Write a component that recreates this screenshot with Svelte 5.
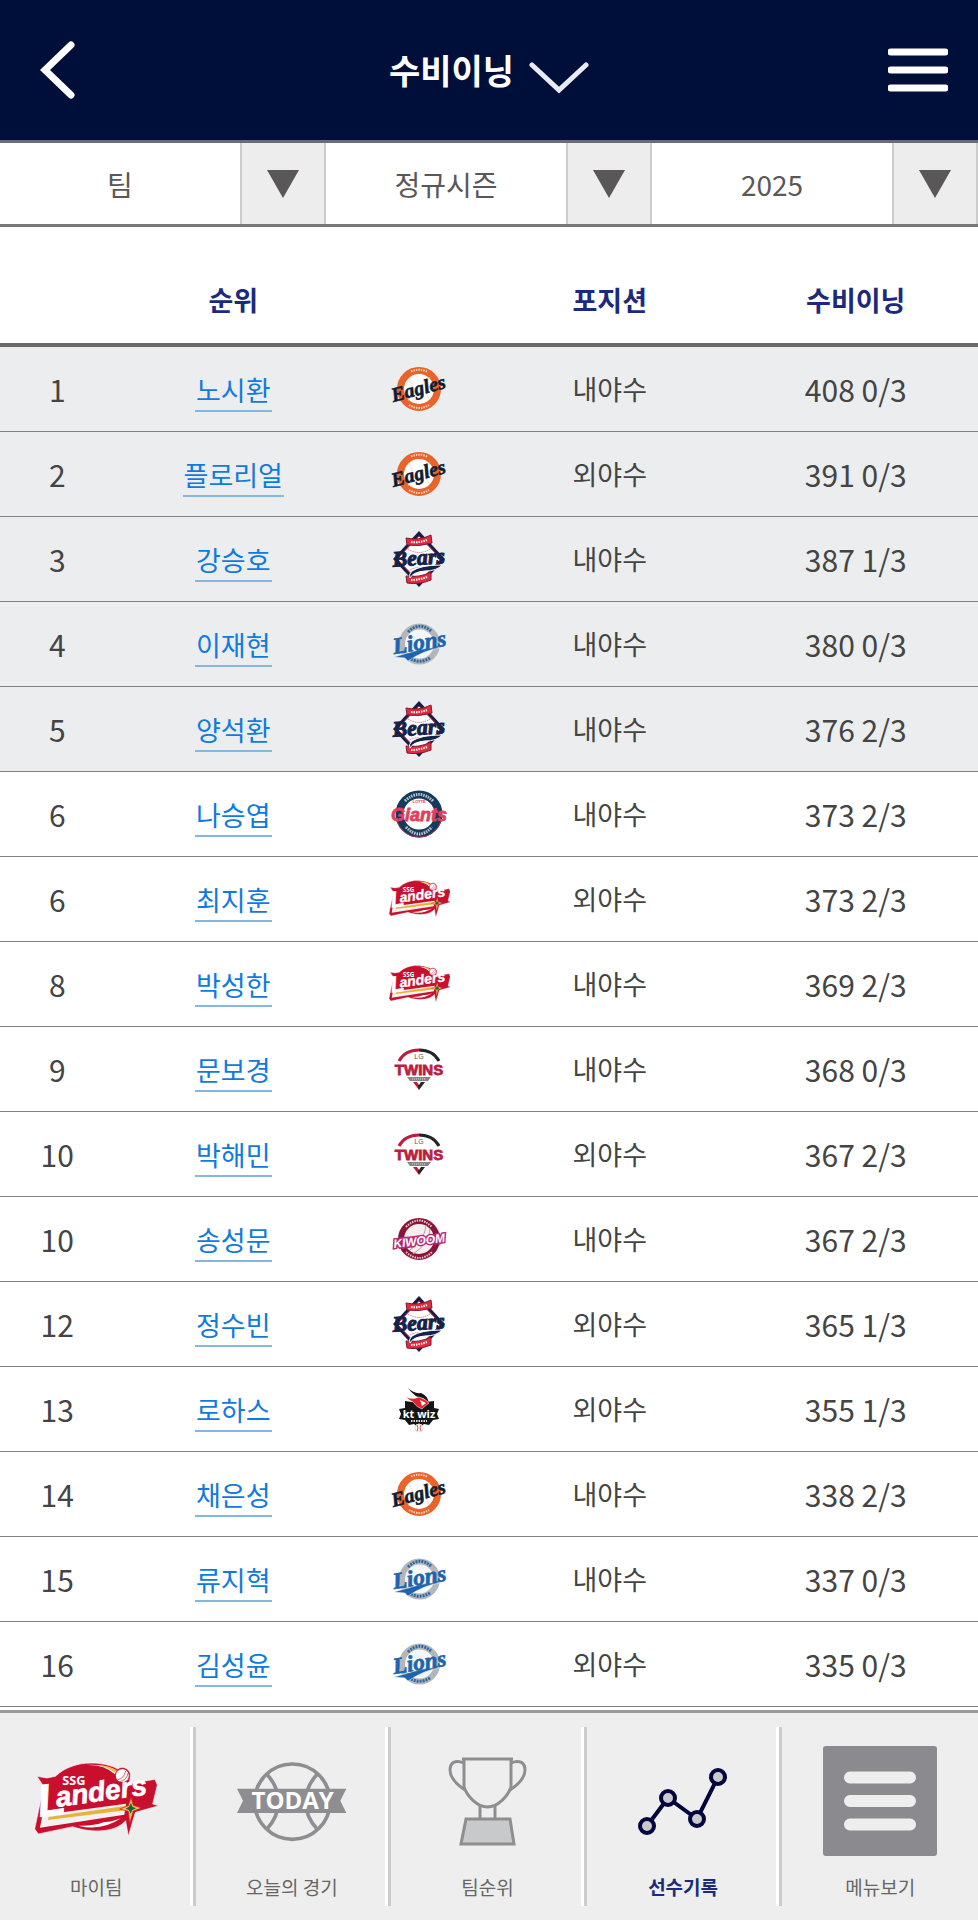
<script>
  const filters = [
    { label: '팀 선택', options: ['팀'] },
    { label: '시즌 선택', options: ['정규시즌'] },
    { label: '연도 선택', options: ['2025'] }
  ];

  const players = [
    [1, '노시환', 'eagles', '내야수', '408 0/3'],
    [2, '플로리얼', 'eagles', '외야수', '391 0/3'],
    [3, '강승호', 'bears', '내야수', '387 1/3'],
    [4, '이재현', 'lions', '내야수', '380 0/3'],
    [5, '양석환', 'bears', '내야수', '376 2/3'],
    [6, '나승엽', 'giants', '내야수', '373 2/3'],
    [6, '최지훈', 'landers', '외야수', '373 2/3'],
    [8, '박성한', 'landers', '내야수', '369 2/3'],
    [9, '문보경', 'twins', '내야수', '368 0/3'],
    [10, '박해민', 'twins', '외야수', '367 2/3'],
    [10, '송성문', 'kiwoom', '내야수', '367 2/3'],
    [12, '정수빈', 'bears', '외야수', '365 1/3'],
    [13, '로하스', 'wiz', '외야수', '355 1/3'],
    [14, '채은성', 'eagles', '내야수', '338 2/3'],
    [15, '류지혁', 'lions', '내야수', '337 0/3'],
    [16, '김성윤', 'lions', '외야수', '335 0/3']
  ];
</script>

{#snippet landersArt()}
  <path fill="#c8102e" stroke="#fff" stroke-opacity=".6" stroke-width="3" d="M108 262L138 267 163 262C195 232 240 218 290 223 320 226 340 234 350 240A24 24 0 0 1 387 266L386 284 462 271 469 288 455 345 474 350 403 370 382 442 374 395C345 430 275 434 215 413L112 435 101 420 128 292Z" />
  <path fill="#fff" d="M232 410Q300 428 360 388Q330 400 310 399Q275 412 232 410Z" />
  <path fill="#fff" d="M255 228Q310 226 342 256L348 246Q315 224 255 228Z" />
  <path fill="#f3b94a" d="M290 230Q322 234 343 252L347 244Q322 228 290 230Z" />
  <path fill="#f4f1f1" d="M124 378L375 344 370 377 117 416Z" />
  <path fill="#e8b13c" d="M143 384L378 350 374 364 140 393Z" />
  <circle cx="364" cy="260" r="21" fill="#fff" stroke="#c8102e" stroke-width="3" />
  <path d="M350 272Q368 270 374 246M355 278Q378 274 381 252" fill="none" stroke="#c8102e" stroke-width="2" />
  <g transform="rotate(-8 170 355)">
    <text x="112" y="376" font-family="Liberation Sans, sans-serif" font-size="84" font-style="italic" font-weight="700" fill="#fff" stroke="#fff" stroke-width="2"><tspan font-size="136">L</tspan><tspan x="168" y="354">anders</tspan></text>
  </g>
  <text x="184" y="289" font-family="Open Sans, sans-serif" font-size="38" font-weight="700" fill="#fff">SSG</text>
  <path fill="#f0bd51" stroke="#c8102e" stroke-width="2" d="M390 324L397 349 422 357 397 366 386 405 382 367 356 360 382 350Z" />
  <path fill="#176534" d="M390 342L394 353 405 358 394 363 389 374 384 363 374 359 384 353Z" />
{/snippet}

{#snippet logo(team)}
  {#if team === 'landers'}
    <svg class="logo" viewBox="95 153 372 360" role="img" aria-label="SSG Landers">{@render landersArt()}</svg>
  {:else if team === 'eagles'}
    <svg class="logo" viewBox="0 0 62 60" role="img" aria-label="Eagles">
      <circle cx="31" cy="30" r="18.5" fill="#fff" stroke="#e9632a" stroke-width="7" />
      <path d="M20 19Q29 30 20 42M42 18Q33 29 42 41" fill="none" stroke="#f5b28f" stroke-dasharray="1 1" />
      <path d="M23 12.500Q31 9 39 12.500M21 46Q31 52 41 46" fill="none" stroke="#fbd2bd" stroke-width="2" stroke-dasharray="1.500 1" />
      <g transform="rotate(-15 31 32)" font-family="Liberation Serif, serif" font-weight="700" font-style="italic" font-size="20">
        <text x="31" y="36" text-anchor="middle" fill="#101c30" stroke="#101c30" stroke-width=".6">Eagles</text>
      </g>
    </svg>
  {:else if team === 'bears'}
    <svg class="logo" viewBox="0 0 62 60" role="img" aria-label="Bears">
      <path d="M31 2L57 30 31 58 5 30Z" fill="#1c1b45" />
      <path d="M31 7L53 30 31 53 9 30Z" fill="#fff" stroke="#a5243c" />
      <path d="M20 20Q31 27 42 20M20 42Q31 35 42 42" fill="none" stroke="#d9576a" stroke-dasharray="1 1" />
      <path d="M18 9Q31 12 43 6L44 14Q31 18 19 16ZM18 47Q31 49 43 43L43 51Q31 56 19 54Z" fill="#e22c3c" stroke="#7d1835" />
      <path d="M23 13Q31 14 39 11M23 51Q31 51 39 48" fill="none" stroke="#fff" stroke-width="2" stroke-dasharray="1.500 1" />
      <path d="M53 36Q33 36 24 42Q20 46 22 49Q25 43 37 42Q49 42 54 36Z" fill="#14234c" stroke="#fff" />
      <g transform="rotate(-4 31 34)" font-family="Liberation Serif, serif" font-weight="700" font-style="italic" font-size="22">
        <text x="31" y="36" text-anchor="middle" fill="#14234c" stroke="#14234c" stroke-width="1">Bears</text>
      </g>
    </svg>
  {:else if team === 'lions'}
    <svg class="logo" viewBox="0 0 62 60" role="img" aria-label="Lions">
      <circle cx="31.500" cy="30" r="17.500" fill="#f4f6f7" stroke="#b4b7b9" stroke-width="6" />
      <path d="M20 18Q31 7 43 17M23 45Q32 50 42 44" fill="none" stroke="#2b66a5" stroke-width="3" stroke-dasharray="2 1" />
      <path d="M6 43L27 37Q41 33 52 34Q36 36 20 47L17 44Z" fill="#1d64ad" stroke="#f4f6f7" stroke-width=".5" />
      <g transform="rotate(-9 31 32)" font-family="Liberation Serif, serif" font-weight="700" font-style="italic" font-size="23">
        <text x="32" y="36" text-anchor="middle" fill="#1d64ad" stroke="#1d64ad" stroke-width=".7">Lions</text>
      </g>
    </svg>
  {:else if team === 'giants'}
    <svg class="logo" viewBox="0 0 62 60" role="img" aria-label="Giants">
      <circle cx="31" cy="30" r="19.500" fill="#fff" stroke="#153b5c" stroke-width="8" />
      <path d="M9 37A23 23 0 0 0 53 37" fill="none" stroke="#a63252" stroke-width="1" />
      <path d="M17 17Q31 4 45 17M18 43Q31 57 44 43" fill="none" stroke="#b9c9d3" stroke-width="3" stroke-dasharray="1.500 1" />
      <text x="31" y="19" text-anchor="middle" font-family="Liberation Sans, sans-serif" font-size="4" font-weight="700" fill="#df405b">LOTTE</text>
      <text x="31" y="37" text-anchor="middle" font-family="Liberation Sans, sans-serif" font-size="18" font-weight="700" font-style="italic" fill="#df405b" stroke="#df405b" stroke-width=".8">Giants</text>
    </svg>
  {:else if team === 'twins'}
    <svg class="logo" viewBox="0 0 62 60" role="img" aria-label="LG Twins">
      <path d="M11 22Q17 11 31 11" fill="none" stroke="#c11a3e" stroke-width="3" />
      <path d="M31 11Q45 11 51 22" fill="none" stroke="#252525" stroke-width="3" />
      <text x="31" y="20" text-anchor="middle" font-family="Liberation Sans, sans-serif" font-size="7" fill="#555">LG</text>
      <text x="31" y="36" text-anchor="middle" font-family="Liberation Sans, sans-serif" font-size="15" font-weight="700" fill="#bd1b40" stroke="#bd1b40" stroke-width=".8">TWINS</text>
      <path d="M19 38H43L40 42H22Z" fill="#858585" />
      <path d="M24 40H38" stroke="#ddd" stroke-dasharray="1 1" />
      <path d="M25 43H31V51Z" fill="#c11a3e" />
      <path d="M37 43L31 51 30 47 32 43Z" fill="#252525" />
      <path d="M29 43H33L31 46Z" fill="#fff" />
    </svg>
  {:else if team === 'kiwoom'}
    <svg class="logo" viewBox="0 0 62 60" role="img" aria-label="Kiwoom">
      <circle cx="31" cy="30" r="18" fill="#f5eeee" stroke="#8b1537" stroke-width="6" />
      <path d="M22 41Q37 31 38 16M25 45Q42 34 42 20" fill="none" stroke="#c899a6" stroke-width="1" />
      <path d="M18 18Q31 5 44 18M18 43Q31 55 44 43" fill="none" stroke="#e6c7ce" stroke-width="2" stroke-dasharray="1.500 1" />
      <g transform="rotate(-7 31 30)" font-family="Liberation Sans, sans-serif" font-size="12" font-weight="700" font-style="italic">
        <text x="31" y="36" text-anchor="middle" fill="#fff" stroke="#b62a78" stroke-width="3" paint-order="stroke">KIWOOM</text>
      </g>
    </svg>
  {:else}
    <svg class="logo" viewBox="0 0 62 60" role="img" aria-label="kt wiz">
      <path d="M17 22L24 23 31 19 38 23 46 22 46 29 51 30 49 35 51 40 45 41 41 46 36 45 31 49 26 45 21 46 17 41 11 40 13 35 11 30 17 29Z" fill="#151515" />
      <path d="M20 9Q26 15 33 14Q39 16 41 24L35 19Q27 19 20 9Z" fill="#151515" />
      <path d="M18 18Q25 21 31 18Q38 20 41 24Q37 27 34 30Q28 28 25 23Q22 22 18 18Z" fill="#e3232e" stroke="#fff" stroke-width=".5" />
      <path d="M32 21L38 24 34 27Z" fill="#fff" />
      <circle cx="31" cy="49" r="4" fill="#fff" stroke="#dedede" />
      <path d="M29 46Q31 49 29 52M33 46Q31 49 33 52" fill="none" stroke="#df5860" />
      <text x="31" y="39" text-anchor="middle" font-family="Open Sans, sans-serif" font-size="11" font-weight="700" fill="#fff">kt wiz</text>
      <path d="M23 42H39" stroke="#ddd" stroke-width="2" stroke-dasharray="1.500 1" />
    </svg>
  {/if}
{/snippet}

<div class="page">
  <header>
    <button class="back" aria-label="뒤로">
      <svg width="36" height="60" viewBox="0 0 36 60"><path d="M31 5L5 30 31 55" fill="none" stroke="#fff" stroke-width="7" stroke-linecap="round" /></svg>
    </button>
    <h1>
      <button class="title">수비이닝
        <svg width="60" height="34" viewBox="0 0 60 34"><path d="M3 4L30 29 57 4" fill="none" stroke="#e9ebf2" stroke-width="5" stroke-linecap="round" /></svg>
      </button>
    </h1>
    <button class="menu" aria-label="메뉴">
      <svg width="60" height="46" viewBox="0 0 60 46"><path d="M3 5H57M3 23H57M3 41H57" stroke="#fff" stroke-width="7" stroke-linecap="round" /></svg>
    </button>
  </header>

  <form class="filters">
    {#each filters as filter}
      <label>
        <select aria-label={filter.label}>
          {#each filter.options as option}<option>{option}</option>{/each}
        </select>
        <span class="arrow"><svg width="32" height="28" viewBox="0 0 32 28"><path d="M0 0H32L16 28Z" fill="#595757" /></svg></span>
      </label>
    {/each}
  </form>

  <main>
    <table>
      <colgroup><col class="c-rank" /><col class="c-name" /><col class="c-team" /><col class="c-pos" /><col class="c-value" /></colgroup>
      <thead>
        <tr><td></td><th scope="col">순위</th><td></td><th scope="col">포지션</th><th scope="col">수비이닝</th></tr>
      </thead>
      <tbody>
        {#each players as [rank, name, team, position, innings], i}
          <tr class:top={i < 5}>
            <td class="num">{rank}</td>
            <td><a href="#player-{i}">{name}</a></td>
            <td>{@render logo(team)}</td>
            <td>{position}</td>
            <td class="num">{innings}</td>
          </tr>
        {/each}
      </tbody>
    </table>
  </main>

  <nav>
    <a href="#myteam">
      <svg viewBox="114 171 342 330" class="wide" aria-hidden="true">{@render landersArt()}</svg>
      <span>마이팀</span>
    </a>
    <a href="#today">
      <svg viewBox="702 171 342 330" aria-hidden="true">
        <g fill="none" stroke="#8e8d92" stroke-width="11">
          <circle cx="874" cy="338" r="113" />
          <path d="M796 254Q832 292 832 338T796 422M950 254Q914 292 914 338T950 422" />
        </g>
        <path d="M708 299H1036L1018 335 1036 372H708L726 335Z" fill="#8e8d92" />
        <text x="875" y="361" text-anchor="middle" font-family="Open Sans, sans-serif" font-size="72" font-weight="700" fill="#fff">TODAY</text>
      </svg>
      <span>오늘의 경기</span>
    </a>
    <a href="#standings">
      <svg viewBox="430 1747 114 110" aria-hidden="true">
        <g fill="none" stroke="#8e8d90" stroke-width="3">
          <path d="M462 1760H513M464 1760V1788C467 1797 477 1808 487.500 1808S508 1797 511 1788V1760" />
          <path d="M464 1764C455 1760 450 1764 450 1771 450 1779 456 1785 465 1791M511 1764C520 1760 525 1764 525 1771 525 1779 519 1785 510 1791" />
          <path d="M480 1807V1819M495 1807V1819" />
          <path d="M466 1820H510L514 1845H461Z" fill="#c8c9cb" />
        </g>
      </svg>
      <span>팀순위</span>
    </a>
    <a href="#records" class="active" aria-current="page">
      <svg viewBox="625 1747 114 110" aria-hidden="true">
        <path d="M646 1827L667 1799 696 1820 717 1778" fill="none" stroke="#04053d" stroke-width="4" />
        <g fill="#c9cacd" stroke="#04053d" stroke-width="4">
          <circle cx="646" cy="1827" r="7" /><circle cx="667" cy="1799" r="7" /><circle cx="696" cy="1820" r="7" /><circle cx="717" cy="1778" r="7" />
        </g>
      </svg>
      <span>선수기록</span>
    </a>
    <a href="#menu">
      <svg viewBox="0 0 114 110" aria-hidden="true">
        <rect width="114" height="110" rx="3" fill="#8b8a8f" />
        <path d="M27 31.500H87M27 55H87M27 78.500H87" stroke="#eee" stroke-width="12" stroke-linecap="round" />
      </svg>
      <span>메뉴보기</span>
    </a>
  </nav>
</div>

<style>
  :global(body) {
    margin: 0;
    background: #fff;
  }
  .page {
    display: flex;
    flex-direction: column;
    min-height: 100vh;
    font-family: 'Noto Sans CJK KR', sans-serif;
    color: #444;
  }
  .page :is(button, select) {
    font: inherit;
    color: inherit;
    border: 0;
    background: none;
    padding: 0;
  }
  svg {
    display: block;
  }
  header {
    display: grid;
    grid-template-columns: 1fr auto 1fr;
    align-items: center;
    height: 140px;
    padding: 0 30px;
    color: #fff;
    background: #000f3a;
    border-bottom: 3px solid #6a6d76;
  }
  .menu {
    justify-self: end;
  }
  .page .back {
    justify-self: start;
    padding-left: 10px;
  }
  h1 {
    margin: 0;
    font-size: 34px;
    line-height: 48px;
  }
  .page .title {
    display: flex;
    align-items: center;
    gap: 15px;
    font-weight: 700;
  }
  .title svg {
    margin-top: 16px;
  }
  .filters {
    display: grid;
    grid-template-columns: repeat(3, 1fr);
    height: 81px;
    border-bottom: 3px solid #777;
    font-size: 28px;
    color: #595757;
  }
  label {
    display: grid;
    grid-template-columns: 1fr 86px;
  }
  .page label select {
    grid-area: 1 / 1 / 2 / 3;
    appearance: none;
    width: 100%;
    padding-right: 86px;
    text-align: center;
    text-align-last: center;
  }
  .arrow {
    grid-area: 1 / 2 / 2 / 3;
    display: grid;
    place-items: center;
    border: solid #ccc;
    border-width: 0 2px;
    background: #ededed;
    pointer-events: none;
  }
  main {
    flex: 1;
  }
  table {
    width: 100%;
    table-layout: fixed;
    border-collapse: separate;
    border-spacing: 0;
    text-align: center;
    font-size: 27px;
    line-height: 36px;
  }
  .c-rank { width: 11.7%; }
  .c-name { width: 24.3%; }
  .c-team { width: 13.7%; }
  .c-pos { width: 25.3%; }
  .c-value { width: 25%; }
  th, td {
    padding: 0;
    box-sizing: border-box;
  }
  thead :is(th, td) {
    height: 120px;
    padding-top: 30px;
    color: #1b2a7c;
    font-size: 27px;
    border-bottom: 4px solid #6a6a6a;
  }
  tbody td {
    height: 85px;
    border-bottom: 1px solid #808080;
  }
  .top {
    background: #ebedee;
  }
  .num {
    font-size: 30px;
  }
  tbody a {
    display: inline-block;
    padding: 6px 1px 2px;
    line-height: 36px;
    color: #0f7ae0;
    text-decoration: none;
    border-bottom: 2px solid #85b7e3;
  }
  .logo {
    width: 62px;
    height: 60px;
    margin: auto;
  }
  nav {
    position: sticky;
    bottom: 0;
    display: grid;
    grid-template-columns: repeat(5, 1fr);
    padding: 14px 0;
    border-top: 3px solid #999;
    background: #eee;
  }
  nav a {
    display: flex;
    flex-direction: column;
    align-items: center;
    gap: 16px;
    padding: 19px 0 4px;
    border-right: 3px solid #ccc;
    box-shadow: inset -3px 0 #fff;
    color: #666;
    font-size: 19px;
    line-height: 30px;
    text-decoration: none;
  }
  nav a:last-child {
    border: 0;
    box-shadow: none;
  }
  nav svg {
    width: 114px;
    height: 110px;
  }
  nav .wide {
    overflow: visible;
  }
  nav .active {
    color: #1b2a7c;
    font-weight: 700;
  }
</style>
